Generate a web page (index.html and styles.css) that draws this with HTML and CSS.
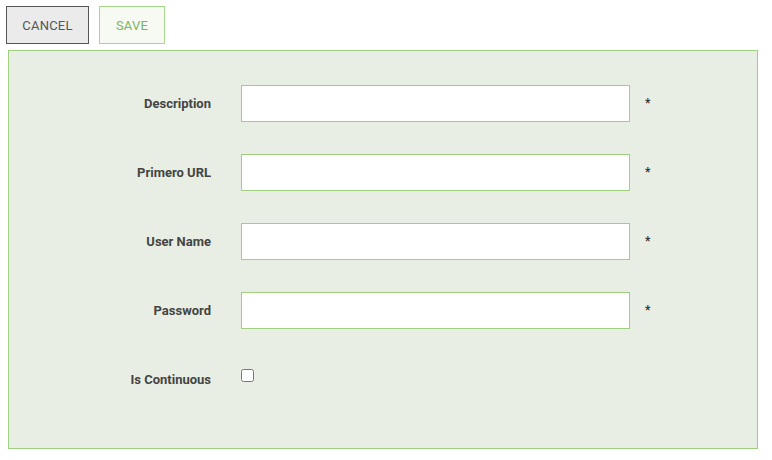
FILE: index.html
```html
<!DOCTYPE html>
<html>
<head>
<meta charset="utf-8">
<link rel="stylesheet" href="styles.css">
</head>
<body>
<div class="toolbar">
  <button class="btn btn-cancel">CANCEL</button>
  <button class="btn btn-save">SAVE</button>
</div>
<div class="panel">
  <div class="row">
    <label class="label">Description</label>
    <input class="field" type="text">
    <span class="req">*</span>
  </div>
  <div class="row">
    <label class="label">Primero URL</label>
    <input class="field" type="text">
    <span class="req">*</span>
  </div>
  <div class="row">
    <label class="label">User Name</label>
    <input class="field" type="text">
    <span class="req">*</span>
  </div>
  <div class="row">
    <label class="label">Password</label>
    <input class="field" type="password">
    <span class="req">*</span>
  </div>
  <div class="row row-check">
    <label class="label">Is Continuous</label>
    <input class="check" type="checkbox">
  </div>
</div>
</body>
</html>
```
FILE: styles.css
```css
html, body {
  margin: 0;
  padding: 0;
  background: #ffffff;
  font-family: Roboto, "Liberation Sans", sans-serif;
}
.toolbar {
  display: flex;
  gap: 10px;
  padding: 6px 0 0 6px;
  height: 38px;
}
.btn {
  box-sizing: border-box;
  height: 38px;
  margin: 0;
  font-family: Roboto, "Liberation Sans", sans-serif;
  font-size: 13px;
  letter-spacing: 0.2px;
  cursor: pointer;
  padding: 0;
}
.btn-cancel {
  width: 83px;
  background: #ebebeb;
  border: 1px solid #555555;
  color: #555555;
}
.btn-save {
  width: 66px;
  background: #f7faf3;
  border: 1px solid #a6d68b;
  color: #7cb25c;
}
.panel {
  box-sizing: border-box;
  margin: 6px 0 0 8px;
  width: 750px;
  height: 399px;
  background: #e8eee3;
  border: 1px solid #a0cf81;
  padding: 34px 0 0 0;
  display: flex;
  flex-direction: column;
  gap: 32px;
}
.row {
  display: flex;
  align-items: center;
  height: 37px;
}
.label {
  width: 202px;
  text-align: right;
  font-size: 13px;
  font-weight: bold;
  color: #444444;
  margin-right: 30px;
}
.field {
  box-sizing: border-box;
  width: 389px;
  height: 37px;
  margin: 0;
  border: 1px solid #a0cf81;
  background: #ffffff;
  outline: none;
}
.req {
  margin-left: 15px;
  font-size: 12px;
  font-weight: bold;
  color: #333333;
  position: relative;
  top: -1px;
}
.check {
  margin: 8px 0 0 0;
  width: 13px;
  height: 13px;
  align-self: flex-start;
}
```
